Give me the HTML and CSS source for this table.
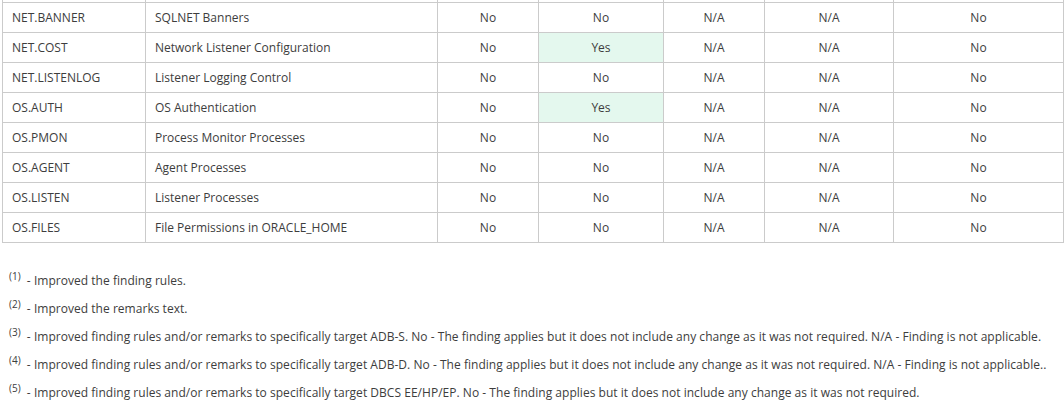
FILE: index.html
```html
<!DOCTYPE html>
<html>
<head>
<meta charset="utf-8">
<link rel="stylesheet" href="styles.css">
</head>
<body>
<div class="wrap">
<table class="grid">
<colgroup>
<col class="c1"><col class="c2"><col class="c3"><col class="c4"><col class="c5"><col class="c6"><col class="c7">
</colgroup>
<tbody>
<tr class="ghost"><td></td><td></td><td></td><td></td><td></td><td></td><td></td></tr>
<tr><td>NET.BANNER</td><td>SQLNET Banners</td><td class="ctr">No</td><td class="ctr">No</td><td class="ctr">N/A</td><td class="ctr">N/A</td><td class="ctr">No</td></tr>
<tr><td>NET.COST</td><td>Network Listener Configuration</td><td class="ctr">No</td><td class="ctr yes">Yes</td><td class="ctr">N/A</td><td class="ctr">N/A</td><td class="ctr">No</td></tr>
<tr><td>NET.LISTENLOG</td><td>Listener Logging Control</td><td class="ctr">No</td><td class="ctr">No</td><td class="ctr">N/A</td><td class="ctr">N/A</td><td class="ctr">No</td></tr>
<tr><td>OS.AUTH</td><td>OS Authentication</td><td class="ctr">No</td><td class="ctr yes">Yes</td><td class="ctr">N/A</td><td class="ctr">N/A</td><td class="ctr">No</td></tr>
<tr><td>OS.PMON</td><td>Process Monitor Processes</td><td class="ctr">No</td><td class="ctr">No</td><td class="ctr">N/A</td><td class="ctr">N/A</td><td class="ctr">No</td></tr>
<tr><td>OS.AGENT</td><td>Agent Processes</td><td class="ctr">No</td><td class="ctr">No</td><td class="ctr">N/A</td><td class="ctr">N/A</td><td class="ctr">No</td></tr>
<tr><td>OS.LISTEN</td><td>Listener Processes</td><td class="ctr">No</td><td class="ctr">No</td><td class="ctr">N/A</td><td class="ctr">N/A</td><td class="ctr">No</td></tr>
<tr><td>OS.FILES</td><td>File Permissions in ORACLE_HOME</td><td class="ctr">No</td><td class="ctr">No</td><td class="ctr">N/A</td><td class="ctr">N/A</td><td class="ctr">No</td></tr>
</tbody>
</table>
</div>
<div class="notes">
<p><sup>(1)</sup> - Improved the finding rules.</p>
<p><sup>(2)</sup> - Improved the remarks text.</p>
<p><sup>(3)</sup> - Improved finding rules and/or remarks to specifically target ADB-S. No - The finding applies but it does not include any change as it was not required. N/A - Finding is not applicable.</p>
<p><sup>(4)</sup> - Improved finding rules and/or remarks to specifically target ADB-D. No - The finding applies but it does not include any change as it was not required. N/A - Finding is not applicable..</p>
<p><sup>(5)</sup> - Improved finding rules and/or remarks to specifically target DBCS EE/HP/EP. No - The finding applies but it does not include any change as it was not required.</p>
</div>
</body>
</html>
```

FILE: styles.css
```css
html, body {
  margin: 0;
  padding: 0;
  background: #ffffff;
}
body {
  font-family: "Open Sans", "Noto Sans", sans-serif;
  color: #3d3d3d;
  font-size: 12px;
  width: 1064px;
  overflow: hidden;
}
.wrap {
  overflow: hidden;
  padding-left: 2px;
}
.grid {
  border-collapse: collapse;
  table-layout: fixed;
  width: 1061px;
  margin-top: -28px;
}
.c1 { width: 143px; }
.c2 { width: 292px; }
.c3 { width: 101px; }
.c4 { width: 125px; }
.c5 { width: 101px; }
.c6 { width: 129px; }
.c7 { width: 170px; }
.grid td {
  border: 1px solid #cbcbcb;
  height: 30px;
  padding: 0 9px;
  box-sizing: border-box;
  white-space: nowrap;
  line-height: 16px;
}
.grid .ctr {
  text-align: center;
  padding: 0;
}
.grid .yes {
  background: #e4f8ee;
}
.notes {
  padding: 30px 0 0 9px;
}
.notes p {
  margin: 0 0 12px 0;
  line-height: 16px;
  white-space: nowrap;
  letter-spacing: 0.03px;
}
.notes sup {
  font-size: 10px;
  line-height: 0;
  vertical-align: 5px;
  margin-right: 3px;
}
```
